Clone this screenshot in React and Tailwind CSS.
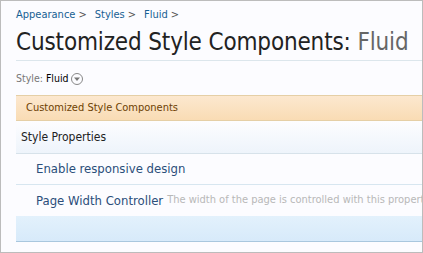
export default function App() {
  return (
    <div
      className="w-[423px] h-[253px] overflow-hidden border border-[#bcbcbc] bg-[#fcfcff] pl-[15px] font-stretch-condensed"
      style={{ fontFamily: '"DejaVu Sans Condensed", "DejaVu Sans", Tahoma, sans-serif' }}
    >
      {/* Breadcrumb */}
      <div className="flex items-center h-[27px] pt-[1px] text-[11px] text-[#176093] whitespace-nowrap">
        <span>Appearance</span>
        <span className="text-[#555] ml-[3px]">&gt;</span>
        <span className="ml-[8px]">Styles</span>
        <span className="text-[#555] ml-[3px]">&gt;</span>
        <span className="ml-[8px]">Fluid</span>
        <span className="text-[#555] ml-[3px]">&gt;</span>
      </div>

      {/* Title */}
      <h1 className="h-[33px] text-[24px] leading-[28px] tracking-[-0.15px] text-[#222] border-b border-[#dce6ec] whitespace-nowrap">
        Customized Style Components: <span className="text-[#666]">Fluid</span>
      </h1>

      {/* Style chooser */}
      <div className="flex items-center h-[34px] pt-[2px] text-[10.5px] whitespace-nowrap">
        <span className="text-[#777]">Style:</span>
        <span className="text-black ml-[3px]">Fluid</span>
        <span className="ml-[2px] w-[12px] h-[12px] rounded-full border border-[#888] flex items-center justify-center">
          <svg width="8" height="6" viewBox="0 0 8 6">
            <path d="M1 1.5 L7 1.5 L4 5 Z" fill="#777" />
          </svg>
        </span>
      </div>

      {/* Orange header */}
      <div className="h-[26px] flex items-center pl-[10px] text-[11px] text-[#6d3f03] border-t border-b border-[#e5cfa6] bg-gradient-to-b from-[#fce8cf] to-[#f9dcb4] whitespace-nowrap">
        Customized Style Components
      </div>

      {/* Section header */}
      <div className="h-[33px] flex items-center pl-[5px] text-[12px] text-[#222] border-b border-[#d7e2ea] bg-gradient-to-b from-[#fdfdff] to-[#eef4fb] whitespace-nowrap">
        Style Properties
      </div>

      {/* Rows */}
      <div className="h-[31px] flex items-center pl-[20px] text-[13px] text-[#2b4e7a] border-b border-[#d7e6f0] whitespace-nowrap">
        Enable responsive design
      </div>
      <div className="h-[31px] flex items-center pl-[20px] text-[13px] text-[#2b4e7a] whitespace-nowrap overflow-hidden">
        Page Width Controller
        <span className="ml-[4px] text-[11px] text-[#b8b8b8]">
          The width of the page is controlled with this property
        </span>
      </div>

      {/* Footer bar */}
      <div className="h-[26px] border-b border-[#a9c7de] bg-gradient-to-b from-[#e3f1fc] to-[#d7eafa]" />
    </div>
  );
}
